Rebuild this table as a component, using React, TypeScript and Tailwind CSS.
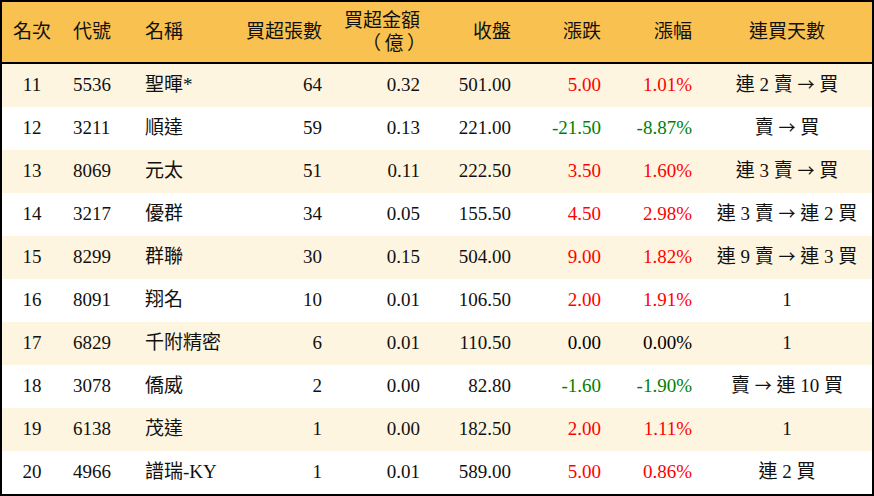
import React from "react";

type Row = {
  rank: string;
  code: string;
  name: string;
  vol: string;
  amt: string;
  close: string;
  chg: string;
  pct: string;
  days: string;
};

const rows: Row[] = [
  { rank: "11", code: "5536", name: "聖暉*", vol: "64", amt: "0.32", close: "501.00", chg: "5.00", pct: "1.01%", days: "連 2 賣 → 買" },
  { rank: "12", code: "3211", name: "順達", vol: "59", amt: "0.13", close: "221.00", chg: "-21.50", pct: "-8.87%", days: "賣 → 買" },
  { rank: "13", code: "8069", name: "元太", vol: "51", amt: "0.11", close: "222.50", chg: "3.50", pct: "1.60%", days: "連 3 賣 → 買" },
  { rank: "14", code: "3217", name: "優群", vol: "34", amt: "0.05", close: "155.50", chg: "4.50", pct: "2.98%", days: "連 3 賣 → 連 2 買" },
  { rank: "15", code: "8299", name: "群聯", vol: "30", amt: "0.15", close: "504.00", chg: "9.00", pct: "1.82%", days: "連 9 賣 → 連 3 買" },
  { rank: "16", code: "8091", name: "翔名", vol: "10", amt: "0.01", close: "106.50", chg: "2.00", pct: "1.91%", days: "1" },
  { rank: "17", code: "6829", name: "千附精密", vol: "6", amt: "0.01", close: "110.50", chg: "0.00", pct: "0.00%", days: "1" },
  { rank: "18", code: "3078", name: "僑威", vol: "2", amt: "0.00", close: "82.80", chg: "-1.60", pct: "-1.90%", days: "賣 → 連 10 買" },
  { rank: "19", code: "6138", name: "茂達", vol: "1", amt: "0.00", close: "182.50", chg: "2.00", pct: "1.11%", days: "1" },
  { rank: "20", code: "4966", name: "譜瑞-KY", vol: "1", amt: "0.01", close: "589.00", chg: "5.00", pct: "0.86%", days: "連 2 買" },
];

const colorOf = (v: string) => {
  if (v.startsWith("-")) return "text-[#008000]";
  if (parseFloat(v) === 0) return "text-black";
  return "text-[#ff0000]";
};

const grid =
  "grid grid-cols-[60px_73px_95px_102px_98px_91px_90px_91px_170px] items-center";

function Days({ text }: { text: string }) {
  const parts = text.split("→");
  return (
    <div className="text-center whitespace-pre">
      {parts.map((p, i) => (
        <React.Fragment key={i}>
          {i > 0 && (
            <span className="font-['Noto_Sans_CJK_TC',sans-serif] text-[17px]">→</span>
          )}
          {p}
        </React.Fragment>
      ))}
    </div>
  );
}

export default function App() {
  return (
    <div className="w-[874px] h-[496px] border-2 border-black bg-white font-['Liberation_Serif','Noto_Sans_CJK_TC',serif] text-[19px] text-[#111] overflow-hidden">
      <div className={`${grid} h-[62px] bg-[#f9c14f] border-b-2 border-black leading-[22px]`}>
        <div className="text-center">名次</div>
        <div className="pl-[11px]">代號</div>
        <div className="pl-[10px]">名稱</div>
        <div className="text-right pr-[10px]">買超張數</div>
        <div className="flex flex-col items-end pr-[10px] gap-[1px]">
          <span>買超金額</span>
          <span className="flex w-[64px] justify-between mr-[-6px]">
            <span>（</span>
            <span>億</span>
            <span>）</span>
          </span>
        </div>
        <div className="text-right pr-[10px]">收盤</div>
        <div className="text-right pr-[10px]">漲跌</div>
        <div className="text-right pr-[10px]">漲幅</div>
        <div className="text-center">連買天數</div>
      </div>
      {rows.map((r, i) => (
        <div
          key={r.rank}
          className={`${grid} h-[43px] ${i % 2 === 0 ? "bg-[#fef5e0]" : "bg-white"}`}
        >
          <div className="text-center">{r.rank}</div>
          <div className="pl-[11px]">{r.code}</div>
          <div className="pl-[10px]">{r.name}</div>
          <div className="text-right pr-[10px]">{r.vol}</div>
          <div className="text-right pr-[10px]">{r.amt}</div>
          <div className="text-right pr-[10px]">{r.close}</div>
          <div className={`text-right pr-[10px] ${colorOf(r.chg)}`}>{r.chg}</div>
          <div className={`text-right pr-[10px] ${colorOf(r.pct)}`}>{r.pct}</div>
          <Days text={r.days} />
        </div>
      ))}
    </div>
  );
}
